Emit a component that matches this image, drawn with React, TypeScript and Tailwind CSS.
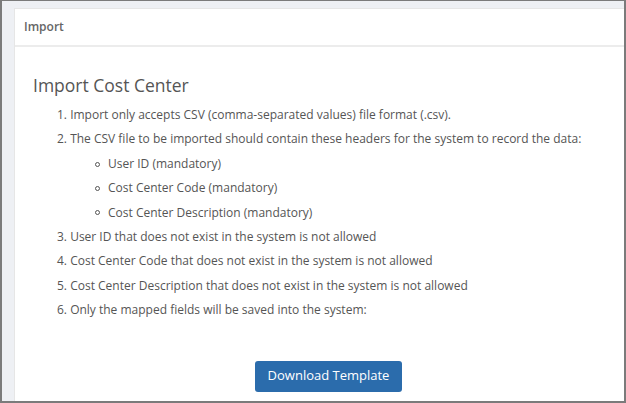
export default function App() {
  const subItems = [
    'User ID (mandatory)',
    'Cost Center Code (mandatory)',
    'Cost Center Description (mandatory)',
  ];

  return (
    <div
      className="w-[626px] h-[403px] border-2 border-t border-[#7b7b7b] bg-[#eef0f4] pl-[12px] pt-[7px] overflow-hidden text-[#555]"
      style={{ fontFamily: '"Open Sans", sans-serif' }}
    >
      <div className="h-full bg-white border-l border-t border-[#e6e6e6] flex flex-col">
        <div className="h-[38px] flex items-center px-[9px] border-b-2 border-[#ececec] text-[12px] font-semibold text-[#666]">
          Import
        </div>
        <div className="flex-1 flex flex-col pt-[26px] pl-[18px]">
          <h2 className="text-[17.5px] leading-[24px] text-[#555]">Import Cost Center</h2>
          <ol className="mt-[6px] pl-[24px] text-[12px] leading-[24.4px] text-[#555]">
            <li>1. Import only accepts CSV (comma-separated values) file format (.csv).</li>
            <li>2. The CSV file to be imported should contain these headers for the system to record the data:</li>
            {subItems.map((s) => (
              <li key={s} className="flex items-center pl-[38px]">
                <span className="w-[5px] h-[5px] rounded-full border border-[#555] mr-[8px]" />
                {s}
              </li>
            ))}
            <li>3. User ID that does not exist in the system is not allowed</li>
            <li>4. Cost Center Code that does not exist in the system is not allowed</li>
            <li>5. Cost Center Description that does not exist in the system is not allowed</li>
            <li>6. Only the mapped fields will be saved into the system:</li>
          </ol>
          <div className="mt-[38px] flex justify-center">
            <button className="h-[31px] px-[13px] rounded-[3px] bg-[#2b6cac] text-white text-[13px]">
              Download Template
            </button>
          </div>
        </div>
      </div>
    </div>
  );
}
